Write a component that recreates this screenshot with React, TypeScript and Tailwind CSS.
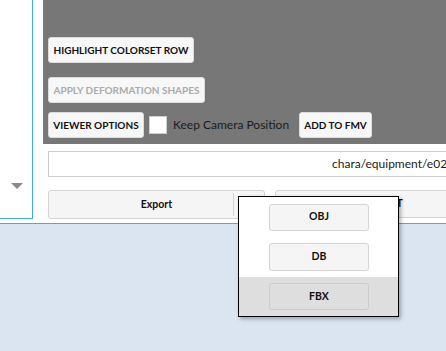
import React from "react";

const btn =
  "h-[26px] flex items-center justify-center rounded-[3px] border border-[#dcdcdc] bg-[#f7f7f7] text-[10px] font-bold text-[#111] whitespace-nowrap";

export default function App() {
  return (
    <div
      className="relative w-[446px] h-[351px] overflow-hidden bg-[#dbe5f1]"
      style={{ fontFamily: 'Lato, "Open Sans", sans-serif' }}
    >
      <div className="flex h-[224px] bg-white border-b border-[#3daee9]">
        {/* left panel */}
        <div className="w-[33px] h-[219px] shrink-0 border-r border-b border-[#3daee9] flex items-end justify-center pb-[29px]">
          <div className="w-0 h-0 border-l-[6px] border-r-[6px] border-t-[6px] border-l-transparent border-r-transparent border-t-[#8a8a8a] ml-[1px]" />
        </div>
        {/* main */}
        <div className="flex-1 min-w-0 ml-[10px] flex flex-col">
          <div className="h-[144px] bg-[#777777] flex flex-col justify-end pl-[5px] pb-[6px]">
            <div className={`${btn} w-[146px]`}>HIGHLIGHT COLORSET ROW</div>
            <div className={`${btn} w-[157px] mt-[14px] text-[#ababab]`}>
              APPLY DEFORMATION SHAPES
            </div>
            <div className="flex items-center mt-[9px]">
              <div className={`${btn} w-[96px]`}>VIEWER OPTIONS</div>
              <div className="w-[18px] h-[18px] ml-[5px] bg-white border border-[#cfcfcf]" />
              <span className="ml-[6px] text-[12px] text-[#1b1b1b] w-[115px] whitespace-nowrap">
                Keep Camera Position
              </span>
              <div className={`${btn} w-[73px] ml-[11px]`}>ADD TO FMV</div>
            </div>
          </div>
          <div className="mt-[7px] ml-[5px] h-[26px] w-[420px] shrink-0 border border-[#cccccc] flex items-center pl-[283px] text-[12px] text-[#1b1b1b] whitespace-nowrap overflow-hidden">
            chara/equipment/e02
          </div>
          <div className="mt-[13px] ml-[5px] flex">
            <div className="relative w-[217px] shrink-0 h-[29px] rounded-[3px] border border-[#d4d4d4] bg-[#f5f5f5] flex items-center justify-center text-[10.5px] font-bold text-[#111]">
              Export
              <div className="absolute left-[184px] top-[2px] bottom-[2px] w-px bg-[#d4d4d4]" />
            </div>
            <div className="ml-[10px] w-[200px] shrink-0 h-[28px] rounded-[3px] border border-[#d4d4d4] bg-[#f5f5f5] flex items-center pl-[86px] text-[10.5px] font-bold text-[#111] whitespace-nowrap">
              IMPORT
            </div>
          </div>
        </div>
      </div>

      {/* popup menu */}
      <div className="absolute left-[238px] top-[196px] w-[161px] h-[121px] bg-white border border-black shadow-[2px_2px_4px_rgba(0,0,0,0.3)] flex flex-col">
        <div className="h-[40px] flex items-center pl-[30px]">
          <div className="w-[100px] h-[27px] rounded-[3px] border border-[#d4d4d4] bg-[#f5f5f5] flex items-center justify-center text-[10.5px] font-bold text-[#111]">
            OBJ
          </div>
        </div>
        <div className="h-[40px] flex items-center pl-[30px]">
          <div className="w-[100px] h-[28px] rounded-[3px] border border-[#d4d4d4] bg-[#f5f5f5] flex items-center justify-center text-[10.5px] font-bold text-[#111]">
            DB
          </div>
        </div>
        <div className="flex-1 bg-[#dedede] flex items-center pl-[30px]">
          <div className="w-[100px] h-[27px] rounded-[3px] border border-[#cccccc] bg-[#dedede] flex items-center justify-center text-[10.5px] font-bold text-[#111]">
            FBX
          </div>
        </div>
      </div>
    </div>
  );
}
